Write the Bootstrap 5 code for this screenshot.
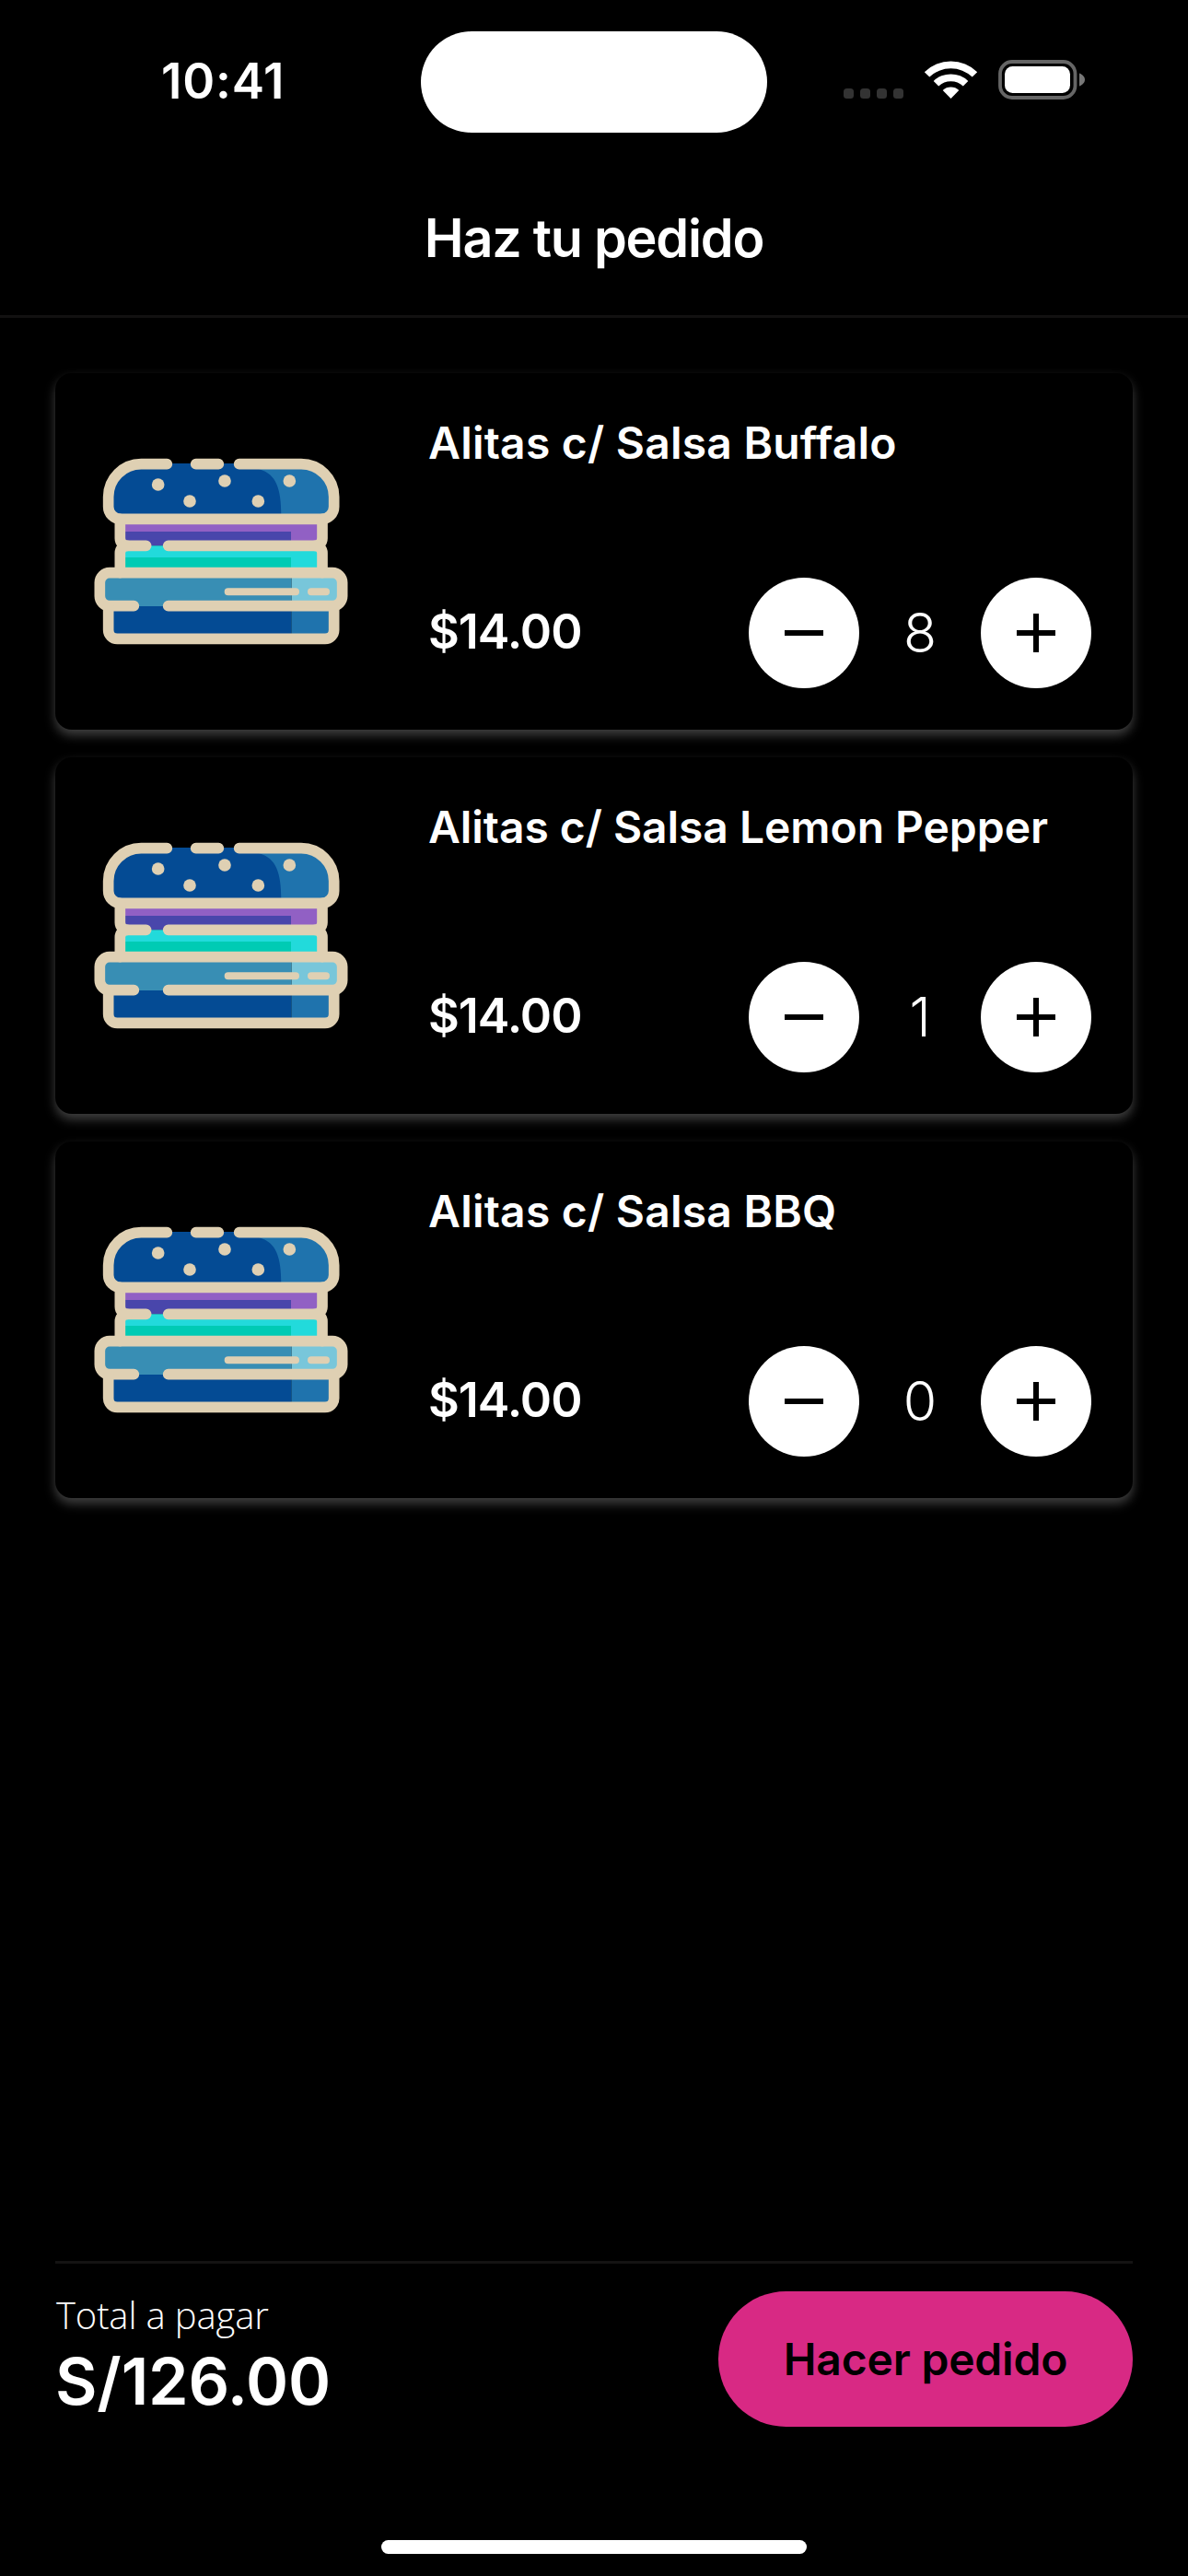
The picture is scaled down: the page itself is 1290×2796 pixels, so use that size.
<!DOCTYPE html>
<html lang="es">
<head>
<meta charset="utf-8">
<meta name="viewport" content="width=device-width, initial-scale=1">
<title>Haz tu pedido</title>
<link href="https://cdn.jsdelivr.net/npm/bootstrap@5.3.0/dist/css/bootstrap.min.css" rel="stylesheet">
<style>
  body { background:#000; color:#fff; font-family:Inter,"Liberation Sans",sans-serif; height:2796px; overflow:hidden; }
  .status-bar { height:177px; }
  .status-side { width:457px; }
  .status-time { font-size:53px; font-weight:600; line-height:60px; padding-left:175px; padding-bottom:2px; letter-spacing:.8px; white-space:nowrap; }
  .island { width:376px; height:110px; margin-top:1px; background:#fff; border-radius:56px; }
  .status-icons { padding-left:83px; }
  .page-title { height:168px; border-bottom:3px solid #121111; padding-bottom:1px; }
  .page-title h1 { font-size:57.5px; font-weight:600; line-height:1; letter-spacing:-1.25px; }
  .menu-list { padding:60px; gap:30px; }
  .dish { --bs-card-bg:#000; --bs-card-color:#fff; height:387px; border:0; border-radius:18px; box-shadow:0 6px 12px rgba(255,255,255,.25); padding-left:30px; }
  .dish-art { margin-top:75px; }
  .dish-info { padding:46px 45px 45px 75px; }
  .dish-name { font-size:48px; font-weight:600; line-height:60px; letter-spacing:.22px; white-space:nowrap; }
  .dish-name-long { letter-spacing:-.06px; }
  .dish-price { font-size:52px; font-weight:600; line-height:60px; letter-spacing:-1px; padding-bottom:3px; }
  .round-btn { width:120px; height:120px; background:#fff; border:0; --bs-btn-padding-x:0; --bs-btn-padding-y:0; }
  .dish-count { width:132px; font-size:59px; font-weight:300; line-height:60px; }
  .checkout { margin:0 60px; height:303px; border-top:3px solid #141313; padding-top:30px; }
  .total-label { font-family:"Open Sans",Inter,sans-serif; font-size:40px; font-weight:300; line-height:51px; letter-spacing:-.15px; padding-left:1px; }
  .total-value { font-size:70px; font-weight:600; line-height:93px; letter-spacing:-.2px; }
  .order-btn { width:450px; height:147px; border:0; background:#d82984; color:#000; font-size:48px; font-weight:600; letter-spacing:-.2px; --bs-btn-padding-x:0; }
  .home-bar { width:462px; height:15px; border-radius:8px; background:#fff; margin-bottom:24px; }
</style>
</head>
<body class="d-flex flex-column">
<svg width="0" height="0" class="position-absolute" aria-hidden="true">
  <symbol id="burger" viewBox="0 0 900 690">
    <path fill="#1f73ad" d="M190 69H711A107 107 0 0 1 818 178V250H83V178A107 107 0 0 1 190 69Z"/>
    <path fill="#044b94" d="M190 69H509L575 88C630 105 646 150 646 240V250H83V178A107 107 0 0 1 190 69Z"/>
    <path fill="#9160c4" d="M130 255H770V337H130Z"/>
    <path fill="#4946ab" d="M130 291H678V337H130Z"/>
    <path fill="#22dadb" d="M130 337H770V420H130Z"/>
    <path fill="#00cbb4" d="M130 375H678V420H130Z"/>
    <path fill="#388eb4" d="M60 430H680V534H60Z"/>
    <path fill="#78c6da" d="M680 430H840V534H680Z"/>
    <path fill="#044b94" d="M90 534H679V635H90Z"/>
    <path fill="#1f73ad" d="M679 534H810V635H679Z"/>
    <g fill="none" stroke="#dfd0b3" stroke-width="35" stroke-linecap="round">
      <path d="M274 71H190A107 107 0 0 0 83 178V210A40 40 0 0 0 123 250H778A40 40 0 0 0 818 210V178A107 107 0 0 0 711 71H509M368 71H442"/>
      <path d="M121 250V313A24 24 0 0 0 145 337H206M278 337H756A24 24 0 0 0 780 313V250"/>
      <path d="M145 337A24 24 0 0 0 121 361V425M756 337A24 24 0 0 1 780 361V425"/>
      <path d="M166 533H87A32 32 0 0 1 55 501V457A32 32 0 0 1 87 425H813A32 32 0 0 1 845 457V501A32 32 0 0 1 813 533H278"/>
      <path d="M83 535V611A29 29 0 0 0 112 640H789A29 29 0 0 0 818 611V535"/>
      <path stroke-width="24" d="M473 487H693M744 487H792"/>
    </g>
    <g fill="#dfd0b3"><circle cx="245" cy="138" r="20.5"/><circle cx="462" cy="126" r="20.5"/><circle cx="673" cy="126" r="20.5"/><circle cx="348" cy="192" r="20.5"/><circle cx="571" cy="192" r="20.5"/></g>
  </symbol>
  <symbol id="minus" viewBox="0 0 42 42"><path d="M0 18H42V24H0Z"/></symbol>
  <symbol id="plus" viewBox="0 0 42 42"><path d="M0 18H18V0H24V18H42V24H24V42H18V24H0Z"/></symbol>
</svg>

<div class="status-bar d-flex align-items-center">
  <div class="status-side"><div class="status-time">10:41</div></div>
  <div class="island"></div>
  <div class="status-side status-icons">
    <svg class="d-block mb-1" width="264" height="43" viewBox="0 0 264 43">
      <g fill="#333"><rect x="0" y="31" width="11" height="11" rx="3.5"/><rect x="18" y="31" width="11" height="11" rx="3.5"/><rect x="36" y="31" width="11" height="11" rx="3.5"/><rect x="54" y="31" width="11" height="11" rx="3.5"/></g>
      <g fill="#fff">
        <path d="M87.8 13.2A41 41 0 0 1 145.2 13.2L139.7 18.6A33.500 33.500 0 0 0 93.300 18.600Z"/>
        <path d="M97.700 23A27 27 0 0 1 135.300 23L129.800 28.400A19.500 19.500 0 0 0 103.200 28.400Z"/>
        <path d="M107.700 33A13 13 0 0 1 125.300 33L116.500 42Z"/>
        <rect x="175" y="7" width="71" height="29" rx="8.5"/>
      </g>
      <rect x="170" y="2" width="81.500" height="39" rx="13" fill="none" stroke="#666" stroke-width="3.800"/>
      <path fill="#777" d="M256 14.500C259.500 16 262 18.500 262 21.500S259.500 27 256 28.500Z"/>
    </svg>
  </div>
</div>
<header class="page-title d-flex align-items-center justify-content-center">
  <h1 class="m-0">Haz tu pedido</h1>
</header>

<main class="menu-list d-flex flex-column">
  <article class="card dish flex-row">
    <svg class="dish-art flex-shrink-0" width="300" height="230"><use href="#burger"/></svg>
    <div class="dish-info flex-grow-1 d-flex flex-column justify-content-between">
      <div class="dish-name">Alitas c/ Salsa Buffalo</div>
      <div class="d-flex align-items-center">
        <span class="dish-price me-auto">$14.00</span>
        <button class="btn round-btn rounded-circle" aria-label="Quitar"><svg width="42" height="42"><use href="#minus"/></svg></button>
        <span class="dish-count text-center">8</span>
        <button class="btn round-btn rounded-circle" aria-label="Agregar"><svg width="42" height="42"><use href="#plus"/></svg></button>
      </div>
    </div>
  </article>
  <article class="card dish flex-row">
    <svg class="dish-art flex-shrink-0" width="300" height="230"><use href="#burger"/></svg>
    <div class="dish-info flex-grow-1 d-flex flex-column justify-content-between">
      <div class="dish-name dish-name-long">Alitas c/ Salsa Lemon Pepper</div>
      <div class="d-flex align-items-center">
        <span class="dish-price me-auto">$14.00</span>
        <button class="btn round-btn rounded-circle" aria-label="Quitar"><svg width="42" height="42"><use href="#minus"/></svg></button>
        <span class="dish-count text-center">1</span>
        <button class="btn round-btn rounded-circle" aria-label="Agregar"><svg width="42" height="42"><use href="#plus"/></svg></button>
      </div>
    </div>
  </article>
  <article class="card dish flex-row">
    <svg class="dish-art flex-shrink-0" width="300" height="230"><use href="#burger"/></svg>
    <div class="dish-info flex-grow-1 d-flex flex-column justify-content-between">
      <div class="dish-name">Alitas c/ Salsa BBQ</div>
      <div class="d-flex align-items-center">
        <span class="dish-price me-auto">$14.00</span>
        <button class="btn round-btn rounded-circle" aria-label="Quitar"><svg width="42" height="42"><use href="#minus"/></svg></button>
        <span class="dish-count text-center">0</span>
        <button class="btn round-btn rounded-circle" aria-label="Agregar"><svg width="42" height="42"><use href="#plus"/></svg></button>
      </div>
    </div>
  </article>
</main>

<footer class="checkout mt-auto d-flex justify-content-between align-items-start">
  <div>
    <div class="total-label">Total a pagar</div>
    <div class="total-value">S/126.00</div>
  </div>
  <button class="btn order-btn rounded-pill">Hacer pedido</button>
</footer>
<div class="home-bar mx-auto flex-shrink-0"></div>
<script src="https://cdn.jsdelivr.net/npm/bootstrap@5.3.0/dist/js/bootstrap.bundle.min.js"></script>
</body>
</html>
